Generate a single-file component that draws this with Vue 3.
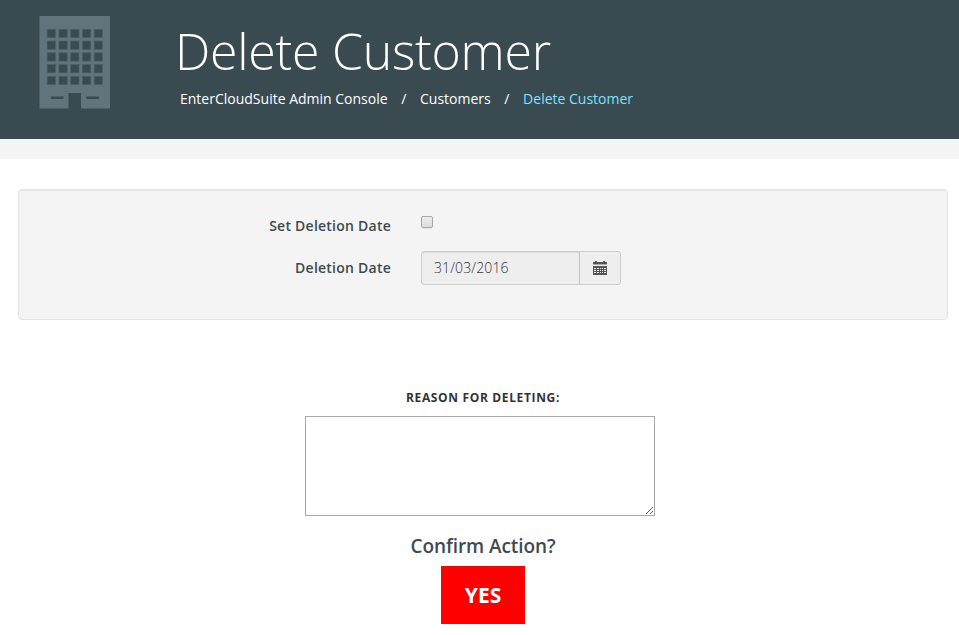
<script setup>
import { ref } from 'vue'

const crumbs = ['EnterCloudSuite Admin Console', 'Customers', 'Delete Customer']
const useDate = ref(false)
const date = ref('31/03/2016')
const reason = ref('')
const cols = [0, 1, 2, 3, 4]
</script>

<template>
  <div class="page">
    <header class="header">
      <svg class="building" width="71" height="93" viewBox="0 0 71 93">
        <path fill="#61747b" d="M.5 0H71V92.5H42V77H29.5V92.5H.5Z" />
        <g fill="#3a4a51" stroke="#4c5d64" stroke-width=".7">
          <template v-for="r in cols" :key="r">
            <rect v-for="c in cols" :key="c" :x="8.2 + c * 11.75" :y="13.3 + r * 11.75" width="8.3" height="8.3" />
          </template>
        </g>
        <path fill="#3a4a51" d="M12 80.5h12.5v2.5h-12.5zM47.3 80.5h12.5v2.5h-12.5z" />
      </svg>
      <div class="heading">
        <h1>Delete Customer</h1>
        <nav class="crumbs">
          <template v-for="(c, i) in crumbs" :key="c">
            <span v-if="i" class="sep">/</span>
            <a :class="{ active: i === crumbs.length - 1 }">{{ c }}</a>
          </template>
        </nav>
      </div>
    </header>
    <div class="strip"></div>

    <section class="well">
      <div class="row check-row">
        <label for="set-date">Set Deletion Date</label>
        <input id="set-date" v-model="useDate" class="check" type="checkbox" />
      </div>
      <div class="row">
        <label for="date">Deletion Date</label>
        <div class="group">
          <input id="date" v-model="date" class="date" type="text" readonly />
          <span class="addon">
            <svg width="14" height="14" viewBox="0 0 14 14" shape-rendering="crispEdges">
              <path fill="#555" d="M2 0h2v1h6V0h2v1h2v2H0V1h2z" />
              <path fill="#aaa" d="M0 3h14v1H0z" />
              <path fill="#555" fill-rule="evenodd" d="M0 5h14v9H0zM1 7v1h2V7zM4 7v1h2V7zM7 7v1h1V7zM9 7v1h1V7zM11 7v1h2V7zM1 9v1h2V9zM4 9v1h2V9zM7 9v1h1V9zM9 9v1h1V9zM11 9v1h2V9zM1 11v1h2v-1zM4 11v1h2v-1zM7 11v1h1v-1zM9 11v1h1v-1zM11 11v1h2v-1z" />
            </svg>
          </span>
        </div>
      </div>
    </section>

    <form class="confirm" @submit.prevent>
      <label class="reason-label" for="reason">REASON FOR DELETING:</label>
      <textarea id="reason" v-model="reason"></textarea>
      <h2>Confirm Action?</h2>
      <button type="submit">YES</button>
    </form>
  </div>
</template>

<style>
body {
  margin: 0;
  background: #fff;
  overflow: hidden;
}
</style>

<style scoped>
.page,
.page * {
  box-sizing: border-box;
}
.page {
  font-family: 'Open Sans', sans-serif;
  font-size: 14px;
  line-height: 20px;
  color: #3f4a50;
}
.header {
  display: flex;
  height: 139px;
  padding: 16px 0 0 39px;
  background: #3a4a51;
  color: #fff;
}
.building {
  flex: none;
}
.heading {
  padding-left: 65px;
}
h1 {
  margin: 0;
  font-size: 50px;
  font-weight: 300;
  line-height: 70px;
  height: 73px;
  letter-spacing: -0.25px;
  white-space: nowrap;
}
.crumbs {
  display: flex;
  padding-left: 5px;
  white-space: nowrap;
}
.sep {
  width: 32.4px;
  text-align: center;
}
.active {
  color: #7fe3ff;
}
.strip {
  height: 20px;
  background: #f4f4f4;
}
.well {
  height: 131px;
  margin: 30px 11px 0 18px;
  padding-top: 25px;
  border: 1px solid #e3e3e3;
  border-radius: 4px;
  background: #f4f4f4;
  box-shadow: inset 0 1px 1px rgba(0, 0, 0, 0.05);
}
.row {
  display: flex;
}
.row label {
  width: 372px;
  margin-right: 30px;
  padding-top: 7px;
  text-align: right;
  font-weight: 600;
  letter-spacing: 0.24px;
}
.check-row {
  height: 36px;
}
.row.check-row label {
  padding-top: 1px;
}
.check {
  appearance: none;
  width: 12px;
  height: 12px;
  margin: 1px 0 0;
  border: 1px solid #a8a8a8;
  border-radius: 2px;
  background: linear-gradient(#ededed, #dcdcdc);
  box-shadow: 0 1px 0 rgba(0, 0, 0, 0.06);
}
.group {
  display: flex;
  width: 200px;
  height: 34px;
}
.date {
  width: 158px;
  padding: 0 12px;
  border: 1px solid #ccc;
  border-right: 0;
  border-radius: 4px 0 0 4px;
  background: #eee;
  color: #333;
  font: 300 14px/20px 'Open Sans', sans-serif;
  letter-spacing: 0.12px;
  box-shadow: inset 0 1px 1px rgba(0, 0, 0, 0.075);
  outline: none;
}
.addon {
  display: flex;
  flex: 1;
  align-items: center;
  justify-content: center;
  padding-right: 1px;
  border: 1px solid #ccc;
  border-left-color: #c4c4c4;
  border-radius: 0 4px 4px 0;
  background: #eee;
}
.confirm {
  display: flex;
  flex-direction: column;
  align-items: center;
  padding: 68px 0 0 7px;
}
.reason-label {
  color: #333;
  font-size: 12px;
  font-weight: 700;
  letter-spacing: 0.65px;
}
textarea {
  width: 350px;
  height: 100px;
  margin: 8px 7px 0 0;
  border: 1px solid #a9a9a9;
  background: #fff;
  outline: none;
  resize: both;
}
h2 {
  margin: 19px 0 0;
  font-size: 19px;
  font-weight: 600;
  line-height: 22px;
  letter-spacing: -0.08px;
}
button {
  width: 84px;
  height: 58px;
  margin-top: 9px;
  padding: 0 0 1px;
  border: 0;
  background: #f00;
  color: #fff;
  font: 700 21px/28px 'Open Sans', sans-serif;
}
</style>
